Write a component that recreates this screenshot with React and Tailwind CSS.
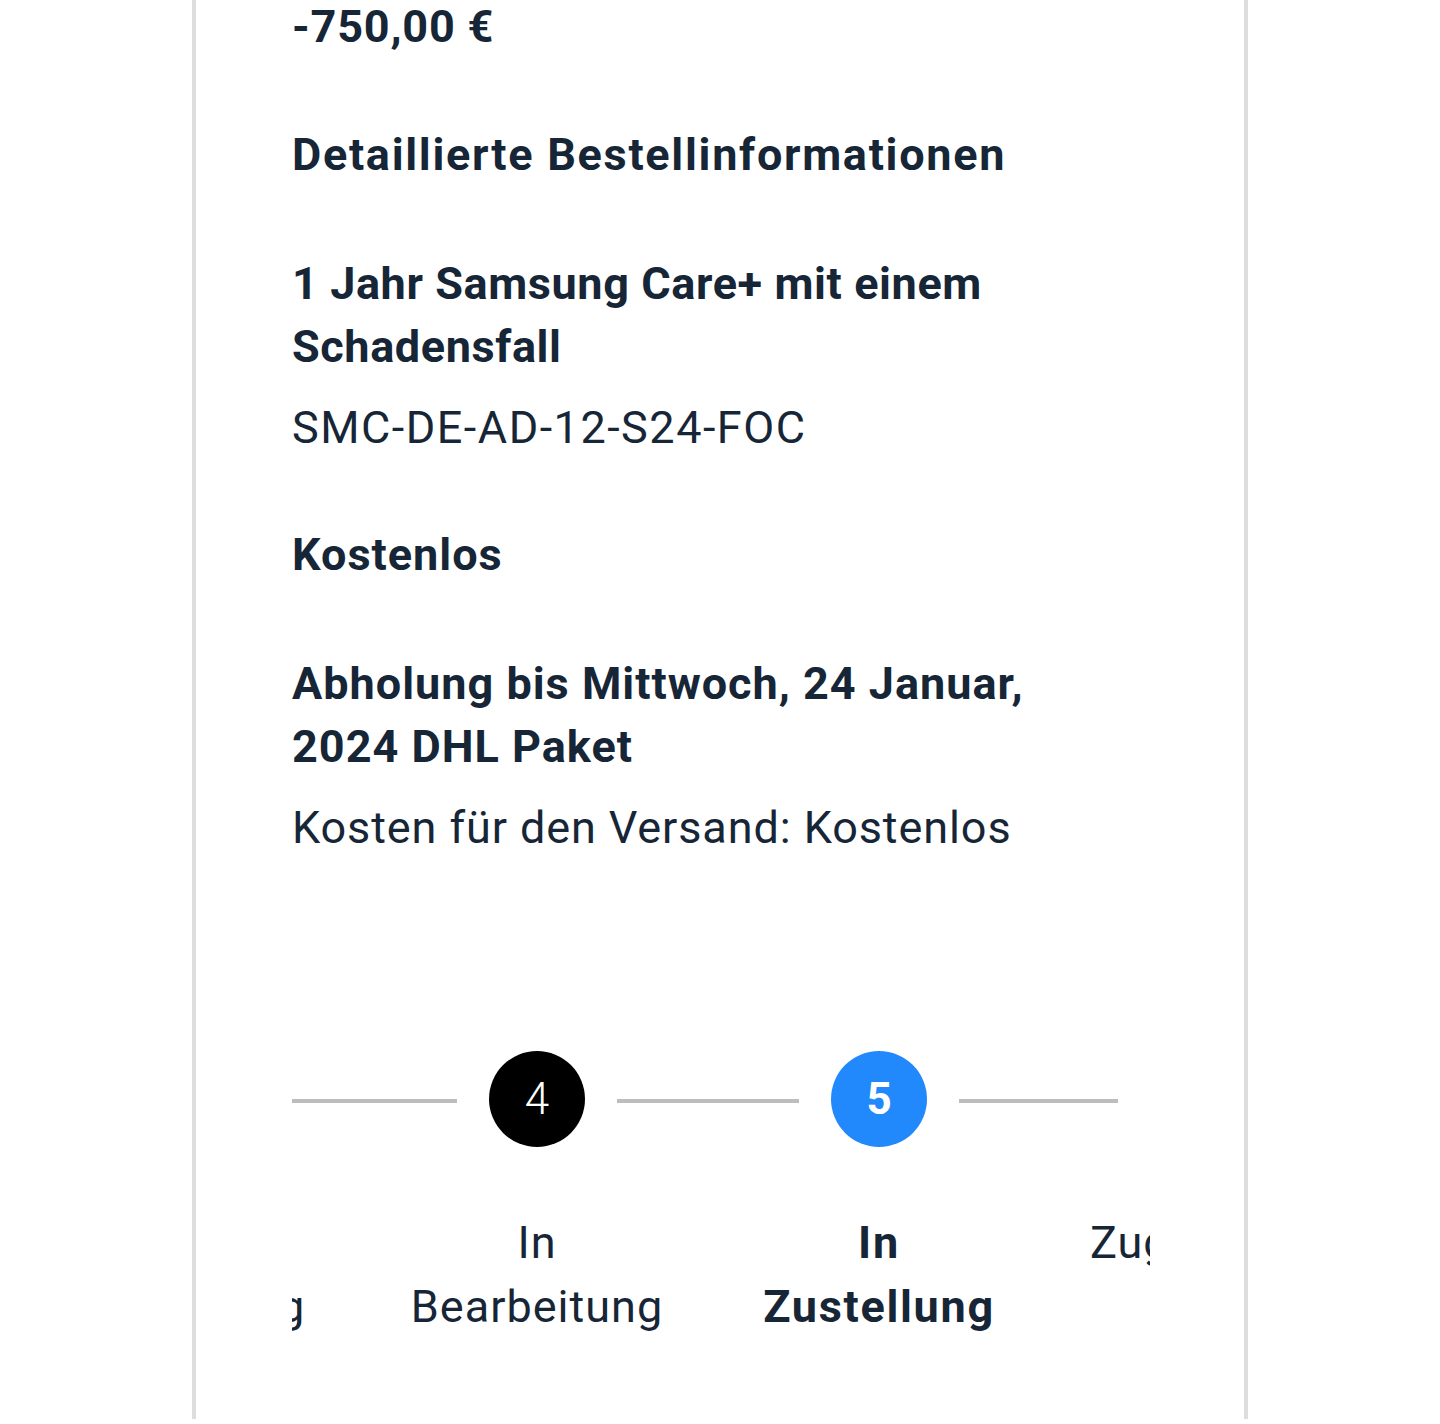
import React from 'react';

const steps = [
  { n: 3, top: 'Zahlung', bottom: 'Bestellung', state: 'done', align: 'items-center' },
  { n: 4, top: 'In', bottom: 'Bearbeitung', state: 'done', align: 'items-center' },
  { n: 5, top: 'In', bottom: 'Zustellung', state: 'active', align: 'items-center' },
  { n: 6, top: 'Zugestellt', bottom: '', state: 'todo', align: 'items-start pl-[40px]' },
];

const Circle = ({ n, active }) => (
  <div
    className={`w-[96px] h-[96px] rounded-full flex items-center justify-center text-white text-[44px] shrink-0 ${
      active ? 'bg-[#2189fb] font-bold' : 'bg-black font-light'
    }`}
  >
    {n}
  </div>
);

const App = () => {
  return (
    <div
      className="w-full min-h-[1424px] h-[1424px] overflow-hidden bg-white text-[#172636]"
      style={{ fontFamily: 'Roboto, "Noto Sans", sans-serif' }}
    >
      <div className="ml-[192px] w-[1056px] h-full border-x-4 border-[#dddddd] pl-[96px]">
        {/* Total */}
        <p className="mt-[-5px] text-[45px] leading-[63px] font-bold tracking-[0.8px]">-750,00 €</p>

        {/* Details heading */}
        <h2 className="mt-[65px] text-[45px] leading-[63px] font-bold tracking-[1.7px]">
          Detaillierte Bestellinformationen
        </h2>

        {/* Product */}
        <p className="mt-[66px] w-[740px] text-[45px] leading-[63px] font-bold tracking-[0.6px]">
          1 Jahr Samsung Care+ mit einem Schadensfall
        </p>
        <p className="mt-[18px] text-[45px] leading-[63px] tracking-[1.5px]">SMC-DE-AD-12-S24-FOC</p>

        <p className="mt-[64px] text-[45px] leading-[63px] font-bold tracking-[1px]">Kostenlos</p>

        {/* Shipping */}
        <p className="mt-[66px] w-[760px] text-[45px] leading-[63px] font-bold tracking-[1px]">
          Abholung bis Mittwoch, 24 Januar, 2024 DHL Paket
        </p>
        <p className="mt-[18px] text-[45px] leading-[63px] tracking-[0.9px]">
          Kosten für den Versand: Kostenlos
        </p>

        {/* Stepper */}
        <div className="mt-[192px] w-[858px] flex items-center">
          <div className="mt-[4px] w-[165px] h-[4px] bg-[#bdbdbd]" />
          <div className="ml-[32px]"><Circle n={4} /></div>
          <div className="mt-[4px] ml-[32px] w-[182px] h-[4px] bg-[#bdbdbd]" />
          <div className="ml-[32px]"><Circle n={5} active /></div>
          <div className="mt-[4px] ml-[32px] w-[159px] h-[4px] bg-[#bdbdbd]" />
        </div>

        <div className="mt-[64px] w-[858px] overflow-hidden">
          <div className="flex ml-[-268px]">
            {steps.map((s) => (
              <div
                key={s.n}
                className={`w-[342px] shrink-0 flex flex-col ${s.align} text-[45px] leading-[64px] ${
                  s.state === 'active' ? 'font-bold tracking-[1.7px]' : 'font-normal tracking-[1px]'
                }`}
              >
                <span>{s.top}</span>
                {s.bottom && <span>{s.bottom}</span>}
              </div>
            ))}
          </div>
        </div>
      </div>
    </div>
  );
};

export default App;
